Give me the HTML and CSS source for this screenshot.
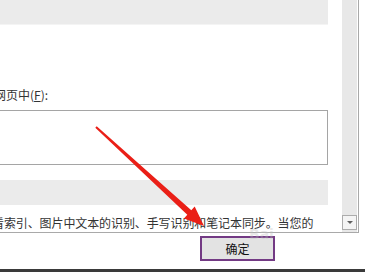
FILE: index.html
```html
<!DOCTYPE html>
<html lang="zh-CN">
<head>
<meta charset="utf-8">
<link rel="stylesheet" href="styles.css">
</head>
<body>
<div class="page">
  <div class="panel">
    <div class="content">
      <div class="band band-top"></div>
      <div class="label">网页中(<u>F</u>):</div>
      <div class="textbox"></div>
      <div class="band band-mid"></div>
      <div class="desc">看索引、图片中文本的识别、手写识别和笔记本同步。当您的</div>
    </div>
    <div class="scrollbar">
      <div class="scroll-down"><span class="tri"></span></div>
    </div>
  </div>
  <div class="footer">
    <button class="ok">确定</button>
  </div>
  <div class="bottom-bar"></div>
  <div class="watermark">Bai</div>
  <svg class="arrow" width="365" height="272" viewBox="0 0 365 272">
    <polygon fill="#ea1f17" points="95.3,127.7 187.3,214.7 183.9,218.4 204,226 194.7,206.6 191.3,210.3 96.7,126.3"/>
  </svg>
</div>
</body>
</html>
```
FILE: styles.css
```css
html, body {
  margin: 0;
  padding: 0;
  background: #ffffff;
}
.page {
  position: relative;
  width: 365px;
  height: 272px;
  overflow: hidden;
  font-family: "Noto Sans CJK SC", "Noto Sans", sans-serif;
  font-size: 12px;
  color: #333333;
}
.panel {
  display: flex;
  width: 358px;
  height: 232px;
  border-right: 1px solid #a9a9a9;
  border-bottom: 1px solid #a9a9a9;
}
.content {
  width: 328px;
  margin-right: 14px;
  display: flex;
  flex-direction: column;
}
.band {
  background: #ebebeb;
  flex: none;
}
.band-top {
  height: 24px;
  border-bottom: 1px solid #f4f4f4;
}
.label {
  margin-top: 62px;
  height: 16px;
  line-height: 16px;
  text-indent: -6px;
  white-space: nowrap;
}
.label u {
  text-decoration: underline;
  text-underline-offset: 1px;
}
.textbox {
  margin-top: 7px;
  height: 53px;
  border: 1px solid #a5a5a5;
  border-left: none;
  flex: none;
}
.band-mid {
  margin-top: 15px;
  height: 25px;
}
.desc {
  margin-top: 10px;
  height: 16px;
  line-height: 16px;
  text-indent: -8px;
  white-space: nowrap;
  overflow: hidden;
  letter-spacing: -0.1px;
}
.scrollbar {
  width: 15px;
  background: #e8e8e8;
  display: flex;
  flex-direction: column;
  justify-content: flex-end;
  padding-bottom: 2px;
  box-sizing: border-box;
}
.scroll-down {
  height: 15px;
  border: 1px solid #acacac;
  background: #f4f4f4;
  box-sizing: border-box;
  display: flex;
  align-items: center;
  justify-content: center;
}
.tri {
  width: 0;
  height: 0;
  border-left: 3px solid transparent;
  border-right: 3px solid transparent;
  border-top: 3px solid #606060;
}
.footer {
  height: 36px;
  padding-left: 200px;
  padding-top: 3px;
  box-sizing: border-box;
}
.ok {
  width: 75px;
  height: 25px;
  padding: 0;
  margin: 0;
  border: 2px solid #733a84;
  background: #e3e3e3;
  font-family: "Noto Sans CJK SC", "Noto Sans", sans-serif;
  font-size: 12px;
  color: #111111;
  line-height: 20px;
}
.bottom-bar {
  height: 3px;
  background: #3a3a3a;
}
.watermark {
  position: absolute;
  left: 249px;
  top: 226px;
  font-family: "DejaVu Sans", sans-serif;
  font-weight: bold;
  font-size: 14px;
  color: rgba(190, 190, 190, 0.35);
}
.arrow {
  position: absolute;
  left: 0;
  top: 0;
}
```
